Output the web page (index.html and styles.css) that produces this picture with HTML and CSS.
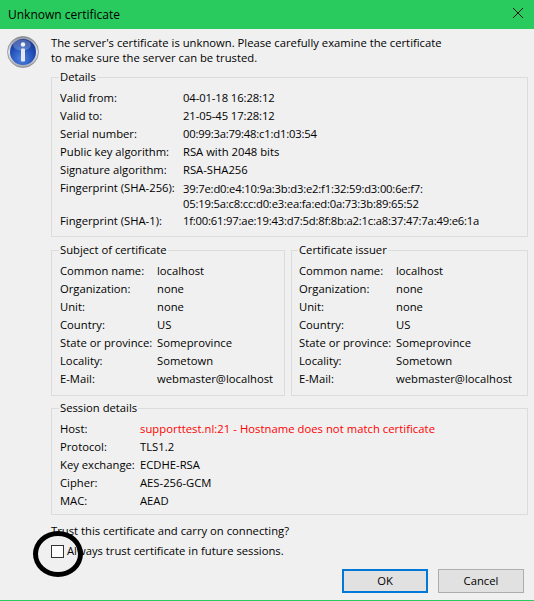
FILE: index.html
```html
<!DOCTYPE html>
<html lang="en">
<head>
<meta charset="utf-8">
<title>Unknown certificate</title>
<link rel="stylesheet" href="styles.css">
</head>
<body>
<div class="dialog">
  <header class="titlebar">
    <span class="title">Unknown certificate</span>
    <svg class="close" width="12" height="12" viewBox="0 0 12 12"><path d="M1 1l10 10M11 1L1 11" stroke="#111" stroke-width="1" fill="none"/></svg>
  </header>
  <div class="content">
    <div class="intro">
      <svg class="info" width="32" height="32" viewBox="0 0 32 32">
        <defs>
          <radialGradient id="ball" cx="0.45" cy="0.75" r="0.8">
            <stop offset="0" stop-color="#4f86e6"/>
            <stop offset="0.55" stop-color="#2350b8"/>
            <stop offset="1" stop-color="#142f8a"/>
          </radialGradient>
          <linearGradient id="ring" x1="0" y1="0" x2="0" y2="1">
            <stop offset="0" stop-color="#8f949c"/>
            <stop offset="0.5" stop-color="#e4e6ea"/>
            <stop offset="1" stop-color="#a4a8b0"/>
          </linearGradient>
        </defs>
        <circle cx="16" cy="16" r="15.5" fill="url(#ring)" stroke="#70747c" stroke-width="0.6"/>
        <circle cx="16" cy="16" r="13" fill="url(#ball)"/>
        <ellipse cx="15" cy="9" rx="9" ry="5.5" fill="#fff" opacity="0.22"/>
        <circle cx="16" cy="8.5" r="2.2" fill="#f2f2f6"/>
        <rect x="14" y="12.5" width="4" height="13" rx="0.8" fill="#e8e9f0"/>
      </svg>
      <p class="message">The server's certificate is unknown. Please carefully examine the certificate<br>to make sure the server can be trusted.</p>
    </div>

    <fieldset class="box details">
      <legend>Details</legend>
      <dl class="rows rows-details">
        <dt>Valid from:</dt><dd class="num">04-01-18 16:28:12</dd>
        <dt>Valid to:</dt><dd class="num">21-05-45 17:28:12</dd>
        <dt>Serial number:</dt><dd class="hex">00:99:3a:79:48:c1:d1:03:54</dd>
        <dt>Public key algorithm:</dt><dd>RSA with 2048 bits</dd>
        <dt>Signature algorithm:</dt><dd>RSA-SHA256</dd>
        <dt>Fingerprint (SHA-256):</dt><dd class="hex multi">39:7e:d0:e4:10:9a:3b:d3:e2:f1:32:59:d3:00:6e:f7:<br>05:19:5a:c8:cc:d0:e3:ea:fa:ed:0a:73:3b:89:65:52</dd>
        <dt>Fingerprint (SHA-1):</dt><dd class="hex">1f:00:61:97:ae:19:43:d7:5d:8f:8b:a2:1c:a8:37:47:7a:49:e6:1a</dd>
      </dl>
    </fieldset>

    <div class="pair">
      <fieldset class="box party party-subject">
        <legend>Subject of certificate</legend>
        <dl class="rows rows-party">
          <dt>Common name:</dt><dd>localhost</dd>
          <dt>Organization:</dt><dd>none</dd>
          <dt>Unit:</dt><dd>none</dd>
          <dt>Country:</dt><dd>US</dd>
          <dt>State or province:</dt><dd>Someprovince</dd>
          <dt>Locality:</dt><dd>Sometown</dd>
          <dt>E-Mail:</dt><dd>webmaster@localhost</dd>
        </dl>
      </fieldset>
      <fieldset class="box party party-issuer">
        <legend>Certificate issuer</legend>
        <dl class="rows rows-party">
          <dt>Common name:</dt><dd>localhost</dd>
          <dt>Organization:</dt><dd>none</dd>
          <dt>Unit:</dt><dd>none</dd>
          <dt>Country:</dt><dd>US</dd>
          <dt>State or province:</dt><dd>Someprovince</dd>
          <dt>Locality:</dt><dd>Sometown</dd>
          <dt>E-Mail:</dt><dd>webmaster@localhost</dd>
        </dl>
      </fieldset>
    </div>

    <fieldset class="box session">
      <legend>Session details</legend>
      <dl class="rows rows-session">
        <dt>Host:</dt><dd class="alert">supporttest.nl:21 - Hostname does not match certificate</dd>
        <dt>Protocol:</dt><dd>TLS1.2</dd>
        <dt>Key exchange:</dt><dd>ECDHE-RSA</dd>
        <dt>Cipher:</dt><dd>AES-256-GCM</dd>
        <dt>MAC:</dt><dd>AEAD</dd>
      </dl>
    </fieldset>

    <p class="question">Trust this certificate and carry on connecting?</p>
    <label class="always"><span class="check"></span>Always trust certificate in future sessions.</label>

    <div class="actions">
      <button class="btn btn-default" type="button">OK</button>
      <button class="btn" type="button">Cancel</button>
    </div>
  </div>
  <div class="marker"></div>
</div>
</body>
</html>
```

FILE: styles.css
```css
* { box-sizing: border-box; }
html, body { margin: 0; padding: 0; }
body {
  width: 534px;
  height: 601px;
  overflow: hidden;
  background: #f0f0f0;
  font-family: "Open Sans", "Noto Sans", sans-serif;
  font-size: 11.25px;
  line-height: 18px;
  color: #000;
}
.dialog {
  position: relative;
  width: 534px;
  height: 601px;
  border-bottom: 1px solid #2acb5e;
  display: flex;
  flex-direction: column;
}
.titlebar {
  height: 29px;
  flex: none;
  background: #2acb5e;
  display: flex;
  align-items: center;
  justify-content: space-between;
  padding: 0 10px 0 8px;
}
.title { font-size: 12px; }
.close { display: block; margin-bottom: 3px; }
.content { padding: 6px 6px 0 7px; flex: 1; }
.intro { display: flex; gap: 12px; height: 33px; }
.info { flex: none; margin-top: 1px; }
.message { margin: 0; line-height: 15px; }
.box {
  margin: 0;
  padding: 0 8px;
  border: 1px solid #dcdcdc;
  min-width: 0;
}
.box legend { padding: 0 1px; margin-left: -1px; line-height: 16px; }
.details { margin-left: 44px; height: 168px; margin-top: 1px; }
.rows { display: grid; row-gap: 0; margin: 4px 0 0; }
dt, dd { margin: 0; white-space: nowrap; }
.num { letter-spacing: -0.1px; }
.hex { letter-spacing: -0.19px; }
.rows-details { grid-template-columns: 123px 1fr; }
.multi { line-height: 15px; padding: 2px 0 1px; }
.pair { display: flex; gap: 6px; margin: 5px 0 0 44px; }
.party { height: 154px; }
.party-subject { flex: 0 0 234px; }
.party-issuer { flex: 1 1 0; padding-left: 7px; }
.rows-party { grid-template-columns: 97px 1fr; }
.session { margin: 4px 0 0 44px; height: 115px; }
.rows-session { grid-template-columns: 80px 1fr; }
.alert { color: #f00; letter-spacing: 0.04px; }
.question { margin: 7px 0 0 44px; line-height: 18px; }
.always { display: flex; align-items: center; margin: 2px 0 0 44px; line-height: 18px; }
.check {
  width: 13px;
  height: 13px;
  margin-right: 3px;
  background: #fff;
  border: 1px solid #333;
  flex: none;
}
.actions { display: flex; justify-content: flex-end; gap: 10px; margin: 9px 4px 0 0; }
.btn {
  width: 86px;
  height: 24px;
  padding: 0;
  background: #e1e1e1;
  border: 1px solid #adadad;
  font: inherit;
  color: #000;
}
.btn-default { border: 2px solid #0078d7; }
.marker {
  position: absolute;
  left: 33px;
  top: 531px;
  width: 50px;
  height: 46px;
  border: 5px solid #000;
  border-radius: 50%;
}
```
